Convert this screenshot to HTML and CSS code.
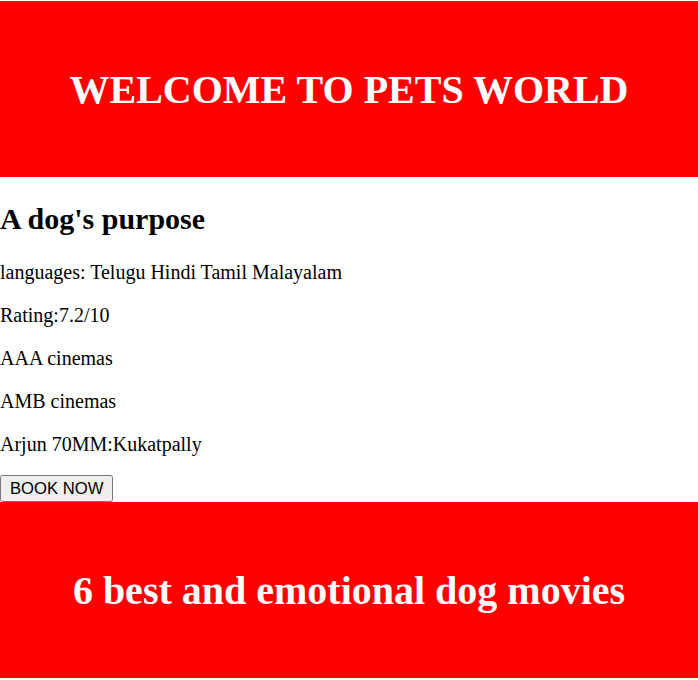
FILE: index.html
```html
<!DOCTYPE html>
<html>
<head>
<meta charset="utf-8">
<link rel="stylesheet" href="styles.css">
</head>
<body>
<div class="banner top">
  <h1 class="title">WELCOME TO PETS WORLD</h1>
</div>
<div class="movie">
  <h2 class="movie-title">A dog's purpose</h2>
  <p class="line">languages: Telugu Hindi Tamil Malayalam</p>
  <p class="line">Rating:7.2/10</p>
  <p class="line">AAA cinemas</p>
  <p class="line">AMB cinemas</p>
  <p class="line last">Arjun 70MM:Kukatpally</p>
  <button class="book">BOOK NOW</button>
</div>
<div class="banner bottom">
  <h1 class="title">6 best and emotional dog movies</h1>
</div>
</body>
</html>
```
FILE: styles.css
```css
html, body {
  margin: 0;
  padding: 0;
}
body {
  padding-top: 1px;
  font-family: "Liberation Serif", "Times New Roman", serif;
  color: #000;
  background: #fff;
}
.banner {
  background: #ff0000;
  height: 176px;
  display: flex;
  align-items: center;
  justify-content: center;
}
.title {
  margin: 0;
  color: #fff;
  font-size: 40px;
  font-weight: bold;
  text-align: center;
}
.movie {
  display: flow-root;
}
.movie-title {
  font-size: 30px;
  font-weight: bold;
  margin: 25px 0;
}
.line {
  font-size: 20px;
  margin: 20px 0;
}
.line.last {
  margin-bottom: 19px;
}
.book {
  display: block;
  font-family: "Liberation Sans", Arial, sans-serif;
  font-size: 16.67px;
  margin: 0;
  padding: 2px 8px 1px;
}
```
